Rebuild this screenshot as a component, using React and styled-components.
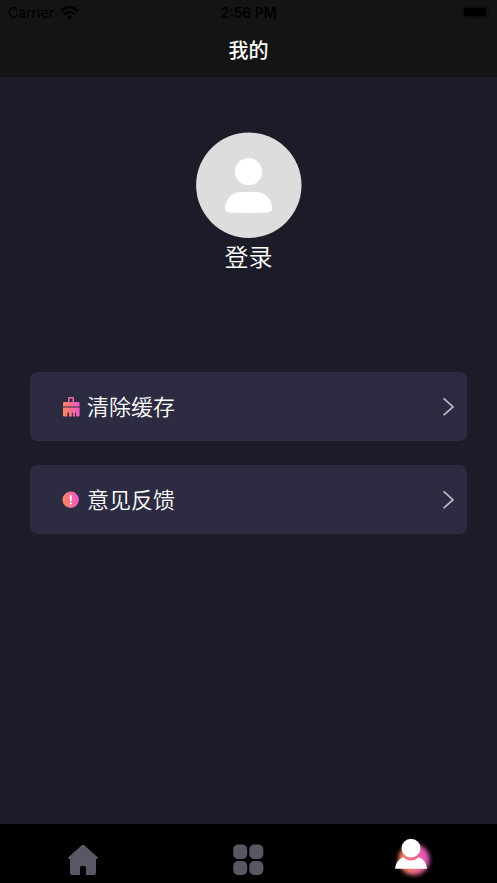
import React from "react";
import styled, { createGlobalStyle } from "styled-components";

const GlobalStyle = createGlobalStyle`
  * { box-sizing: border-box; }
  body {
    margin: 0;
    background: #1c1b28;
    font-family: Inter, "Noto Sans CJK SC", sans-serif;
  }
  button { font: inherit; color: inherit; border: 0; padding: 0; background: none; cursor: pointer; }
`;

const Screen = styled.div`
  display: flex;
  flex-direction: column;
  min-height: 100vh;
  color: #fff;
`;

const Header = styled.header`
  background: #141414;
`;

const StatusBar = styled.div`
  display: grid;
  grid-template-columns: 1fr auto 1fr;
  align-items: center;
  height: 25px;
  padding: 0 8px;
  color: #000;
  font-size: 14px;
  line-height: 25px;
`;

const Carrier = styled.span`
  display: flex;
  align-items: center;
  gap: 6px;
`;

const Clock = styled.time`
  font-weight: 600;
`;

const Battery = styled.svg`
  justify-self: end;
  margin-right: -4px;
`;

const Title = styled.h1`
  margin: 0;
  height: 52px;
  font-size: 20px;
  font-weight: 500;
  line-height: 52px;
  text-align: center;
`;

const Main = styled.main`
  flex: 1;
  padding: 55px 30px 24px;
`;

const Profile = styled.button`
  display: flex;
  flex-direction: column;
  align-items: center;
  margin: 0 auto;
`;

const LoginLabel = styled.span`
  font-size: 24px;
  font-weight: 350;
  line-height: 40px;
`;

const Menu = styled.ul`
  display: flex;
  flex-direction: column;
  gap: 24px;
  margin: 94px 0 0;
  padding: 0;
  list-style: none;
`;

const MenuButton = styled.button`
  display: flex;
  align-items: center;
  width: 100%;
  height: 69px;
  padding: 0 12px 0 32px;
  border-radius: 7px;
  background: #2c2b42;
`;

const MenuLabel = styled.span`
  flex: 1;
  margin-left: 7px;
  font-size: 22px;
  font-weight: 350;
  line-height: 32px;
  text-align: left;
`;

const TabBar = styled.nav`
  display: grid;
  grid-template-columns: repeat(3, 1fr);
  height: 59px;
  background: #000;
`;

const Tab = styled.button`
  display: flex;
  justify-content: center;
  align-items: flex-start;
  padding-top: ${(p) => (p.$active ? "8px" : "20px")};
`;

const WifiIcon = () => (
  <svg width="19" height="14" viewBox="0 0 19 14" fill="none" stroke="#000" strokeWidth="2.6" aria-hidden="true">
    <path d="M1 5.3C6-.1 13-.1 18 5.3" />
    <path d="M4.1 8.5C7.3 5.2 11.7 5.2 14.9 8.5" />
    <path d="M6.7 10.7C8.4 9.1 10.6 9.1 12.3 10.7L9.5 13.6Z" fill="#000" stroke="none" />
  </svg>
);

const BatteryIcon = () => (
  <Battery width="31" height="14" viewBox="0 0 31 14" aria-hidden="true">
    <rect x="0.7" y="1" width="25.3" height="11.5" rx="3.5" fill="none" stroke="#0d0d0d" strokeWidth="1.3" />
    <rect x="2" y="2" width="22" height="8.6" rx="1" fill="#000" />
    <path d="M27.5 4.5q2 2 0 4z" fill="#0b0b0b" />
  </Battery>
);

const AvatarIcon = () => (
  <svg width="106" height="106" viewBox="0 0 106 106" aria-hidden="true">
    <circle cx="52.8" cy="53.2" r="52.7" fill="#ddd" />
    <circle cx="52.5" cy="39.7" r="13.6" fill="#fff" />
    <path d="M44.5 60H60.5C69.5 60 76 68 76 76Q76 80.6 70.5 80.6Q52.5 81.4 34.5 80.6Q29 80.6 29 76C29 68 35.5 60 44.5 60Z" fill="#fff" />
  </svg>
);

const Gradient = ({ id }) => (
  <linearGradient id={id} x1="0" y1="0.6" x2="1" y2="0.4">
    <stop offset="0" stopColor="#ff8660" />
    <stop offset="1" stopColor="#ef55c8" />
  </linearGradient>
);

const BrushIcon = () => (
  <svg width="18" height="20" viewBox="0 0 18 20" aria-hidden="true">
    <defs><Gradient id="brush" /></defs>
    <path
      fill="url(#brush)"
      fillRule="evenodd"
      d="M6 5V1.3Q6 0 7.3 0H10.7Q12 0 12 1.3V5H16.4Q17.6 5 17.6 6.2V9.4H1V6.2Q1 5 2.2 5ZM7.5 5H10.5V1.5H7.5ZM1 10.4H17.6V18.2Q17.6 19.4 16.4 19.4H14V15.4H13V19.4H10.8V15.4H9.8V19.4H7V15.4H6V19.4H5.6V15.4H5V19.4H2.2Q1 19.4 1 18.2Z"
    />
  </svg>
);

const NoticeIcon = () => (
  <svg width="18" height="18" viewBox="0 0 18 18" aria-hidden="true">
    <defs><Gradient id="notice" /></defs>
    <circle cx="8.7" cy="8.7" r="8.2" fill="url(#notice)" />
    <path d="M7.7 4.2H9.8L9.4 10.6H8.1Z" fill="#fff" />
    <circle cx="8.75" cy="12.6" r="1.1" fill="#fff" />
  </svg>
);

const Chevron = () => (
  <svg width="12" height="18" viewBox="0 0 12 18" fill="none" stroke="#b7b6c3" strokeWidth="1.8" aria-hidden="true">
    <path d="M1.2 0.9L10 8.8L1.2 16.7" strokeLinecap="round" strokeLinejoin="round" />
  </svg>
);

const HomeIcon = () => (
  <svg width="32" height="32" viewBox="0 0 32 32" fill="#585764" aria-hidden="true">
    <path d="M14.7 1.3Q16 .2 17.3 1.3L30.6 13.3Q31.7 15 30.2 15H29V29Q29 31 27 31H19V23.5Q19 22 17.5 22H14.5Q13 22 13 23.5V31H5Q3 31 3 29V15H1.8Q.3 15 1.4 13.3Z" />
  </svg>
);

const GridIcon = () => (
  <svg width="32" height="32" viewBox="0 0 32 32" fill="#585764" aria-hidden="true">
    <rect x="1.2" y="0.5" width="14" height="14.5" rx="4.8" />
    <rect x="17.3" y="0.5" width="14" height="14.5" rx="4.8" />
    <rect x="1.2" y="17" width="14" height="14" rx="4.8" />
    <rect x="17.3" y="17" width="14" height="14" rx="4.8" />
  </svg>
);

const UserIcon = () => (
  <svg width="48" height="50" viewBox="0 0 48 50" aria-hidden="true">
    <defs>
      <linearGradient id="glow" x1="0" y1="0.6" x2="1" y2="0.4">
        <stop offset="0" stopColor="#ff8656" />
        <stop offset="1" stopColor="#e04fc4" />
      </linearGradient>
      <filter id="soft" x="-30%" y="-30%" width="160%" height="160%">
        <feGaussianBlur stdDeviation="2.2" />
      </filter>
    </defs>
    <circle cx="24" cy="27.5" r="15.5" fill="url(#glow)" filter="url(#soft)" />
    <circle cx="21" cy="16.2" r="9.4" fill="#fff" />
    <path d="M13 25.2Q21 32 29 25.2Q36 28 37 36.8H5Q6 28 13 25.2Z" fill="#fff" />
  </svg>
);

const items = [
  { label: "清除缓存", Icon: BrushIcon },
  { label: "意见反馈", Icon: NoticeIcon },
];

const tabs = [
  { name: "首页", Icon: HomeIcon },
  { name: "分类", Icon: GridIcon },
  { name: "我的", Icon: UserIcon, active: true },
];

export default function App() {
  return (
    <Screen>
      <GlobalStyle />
      <Header>
        <StatusBar>
          <Carrier>Carrier <WifiIcon /></Carrier>
          <Clock>2:56 PM</Clock>
          <BatteryIcon />
        </StatusBar>
        <Title>我的</Title>
      </Header>
      <Main>
        <Profile type="button">
          <AvatarIcon />
          <LoginLabel>登录</LoginLabel>
        </Profile>
        <Menu>
          {items.map(({ label, Icon }) => (
            <li key={label}>
              <MenuButton type="button">
                <Icon />
                <MenuLabel>{label}</MenuLabel>
                <Chevron />
              </MenuButton>
            </li>
          ))}
        </Menu>
      </Main>
      <TabBar>
        {tabs.map(({ name, Icon, active }) => (
          <Tab key={name} type="button" aria-label={name} aria-current={active ? "page" : undefined} $active={active}>
            <Icon />
          </Tab>
        ))}
      </TabBar>
    </Screen>
  );
}
